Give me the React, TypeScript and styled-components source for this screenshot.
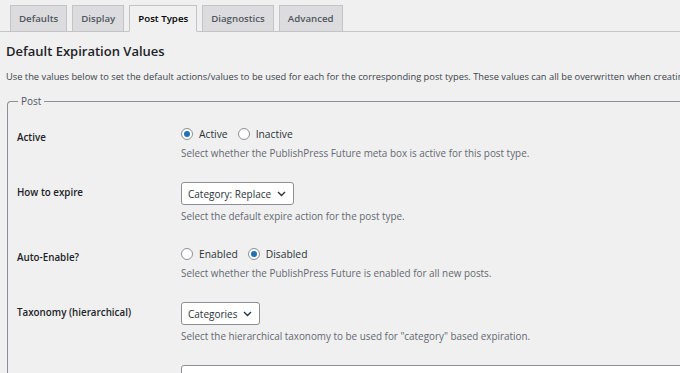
import React from "react";
import styled, { createGlobalStyle } from "styled-components";

const Global = createGlobalStyle`
  html, body { margin: 0; padding: 0; background: #f0f0f1; }
  body { font-family: "Open Sans", "Noto Sans", sans-serif; color: #1d2327; overflow: hidden; }
`;

const Page = styled.div`
  width: 680px;
  height: 373px;
  overflow: hidden;
  background: #f0f0f1;
`;

const TabBar = styled.div`
  display: flex;
  gap: 5px;
  padding: 5px 0 0 10px;
  border-bottom: 1px solid #c3c4c7;
  height: 26px;
`;

const Tab = styled.div<{ $active?: boolean }>`
  display: flex;
  align-items: center;
  padding: 0 8px;
  box-sizing: border-box;
  border: 1px solid #c3c4c7;
  border-bottom: ${(p) => (p.$active ? "1px solid #f0f0f1" : "none")};
  margin-bottom: ${(p) => (p.$active ? "-1px" : "0")};
  height: ${(p) => (p.$active ? "27px" : "26px")};
  background: ${(p) => (p.$active ? "#f0f0f1" : "#dcdcde")};
  color: ${(p) => (p.$active ? "#000" : "#50575e")};
  font-size: 9.7px;
  font-weight: 600;
  white-space: nowrap;
`;

const Content = styled.div`
  padding: 0 0 0 6px;
`;

const Heading = styled.h2`
  margin: 0;
  padding-top: 10px;
  font-size: 13px;
  font-weight: 600;
  line-height: 18px;
  color: #1d2327;
`;

const Intro = styled.p`
  margin: 0;
  padding-top: 9px;
  font-size: 9.3px;
  line-height: 16px;
  white-space: nowrap;
  color: #3c434a;
`;

const Fieldset = styled.fieldset`
  margin: 9px 0 0 1px;
  padding: 6px 0 0 9px;
  border: 1px solid #8c8f94;
  border-right: none;
  border-radius: 4px 0 0 0;
  min-width: 0;
`;

const Legend = styled.legend`
  padding: 0 3px;
  margin-left: 1px;
  font-size: 10px;
  color: #50575e;
`;

const Row = styled.div`
  display: grid;
  grid-template-columns: 164px 1fr;
  padding: 11px 0;
`;

const Label = styled.div<{ $offset: number }>`
  font-size: 9.8px;
  font-weight: 600;
  line-height: 16px;
  padding-top: ${(p) => p.$offset}px;
  color: #1d2327;
`;

const Field = styled.div`
  display: flex;
  flex-direction: column;
  gap: 4px;
`;

const Radios = styled.div`
  display: flex;
  align-items: center;
  gap: 10px;
  height: 17px;
`;

const RadioLabel = styled.span`
  display: inline-flex;
  align-items: center;
  gap: 6px;
  font-size: 10.3px;
  color: #2c3338;
`;

const RadioDot = styled.span<{ $checked?: boolean }>`
  width: 12px;
  height: 12px;
  box-sizing: border-box;
  border: 1px solid #8c8f94;
  border-radius: 50%;
  background: #fff;
  display: inline-flex;
  align-items: center;
  justify-content: center;
  &::after {
    content: "";
    width: 6px;
    height: 6px;
    border-radius: 50%;
    background: ${(p) => (p.$checked ? "#2271b1" : "transparent")};
  }
`;

const Select = styled.div`
  align-self: flex-start;
  display: inline-flex;
  align-items: center;
  gap: 6px;
  height: 23px;
  box-sizing: border-box;
  padding: 0 7px 0 6px;
  background: #fff;
  border: 1px solid #8c8f94;
  border-radius: 3px;
  font-size: 10px;
  color: #2c3338;
  white-space: nowrap;
`;

const Desc = styled.div`
  font-size: 9.9px;
  line-height: 14px;
  color: #646970;
  white-space: nowrap;
`;

const Input = styled.div`
  height: 23px;
  width: 600px;
  background: #fff;
  border: 1px solid #8c8f94;
  border-radius: 3px;
`;

const Chevron = () => (
  <svg width="9" height="6" viewBox="0 0 9 6" fill="none">
    <path d="M1 1l3.5 3.5L8 1" stroke="#2c3338" strokeWidth="1.4" />
  </svg>
);

const Radio = ({ label, checked }: { label: string; checked?: boolean }) => (
  <RadioLabel>
    <RadioDot $checked={checked} />
    {label}
  </RadioLabel>
);

export default function App() {
  return (
    <Page>
      <Global />
      <TabBar>
        <Tab>Defaults</Tab>
        <Tab>Display</Tab>
        <Tab $active>Post Types</Tab>
        <Tab>Diagnostics</Tab>
        <Tab>Advanced</Tab>
      </TabBar>
      <Content>
        <Heading>Default Expiration Values</Heading>
        <Intro>
          Use the values below to set the default actions/values to be used for each for the corresponding post types. These values can all be overwritten when creating
        </Intro>
        <Fieldset>
          <Legend>Post</Legend>
          <Row>
            <Label $offset={5}>Active</Label>
            <Field>
              <Radios>
                <Radio label="Active" checked />
                <Radio label="Inactive" />
              </Radios>
              <Desc>Select whether the PublishPress Future meta box is active for this post type.</Desc>
            </Field>
          </Row>
          <Row>
            <Label $offset={3}>How to expire</Label>
            <Field>
              <Select>
                Category: Replace <Chevron />
              </Select>
              <Desc>Select the default expire action for the post type.</Desc>
            </Field>
          </Row>
          <Row>
            <Label $offset={5}>Auto-Enable?</Label>
            <Field>
              <Radios>
                <Radio label="Enabled" />
                <Radio label="Disabled" checked />
              </Radios>
              <Desc>Select whether the PublishPress Future is enabled for all new posts.</Desc>
            </Field>
          </Row>
          <Row>
            <Label $offset={3}>Taxonomy (hierarchical)</Label>
            <Field>
              <Select>
                Categories <Chevron />
              </Select>
              <Desc>Select the hierarchical taxonomy to be used for "category" based expiration.</Desc>
            </Field>
          </Row>
          <Row>
            <Label $offset={3}></Label>
            <Field>
              <Input />
            </Field>
          </Row>
        </Fieldset>
      </Content>
    </Page>
  );
}
